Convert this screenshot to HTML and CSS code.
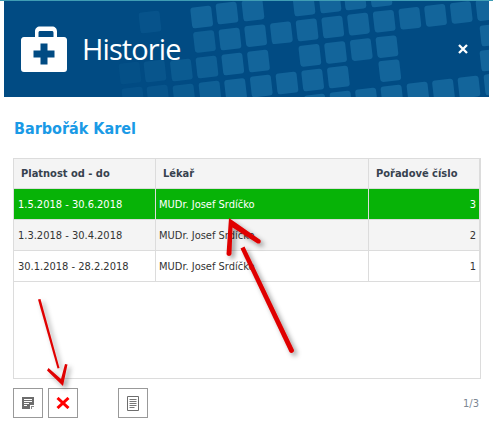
FILE: index.html
```html
<!DOCTYPE html>
<html lang="cs">
<head>
<meta charset="utf-8">
<title>Historie</title>
<link rel="stylesheet" href="styles.css">
</head>
<body>
<div class="page">
  <div class="topline"></div>
  <header class="banner">
    <svg class="pattern" width="485" height="96" viewBox="4 1 485 96" aria-hidden="true">
      <defs><rect id="t" x="-10.5" y="-10.5" width="21" height="21" rx="3"/></defs>
      <g fill="#13659b">
        <use href="#t" transform="translate(150 22) rotate(-6.5)" opacity=".35"/>
        <use href="#t" transform="translate(201.7 17) rotate(-6.5)"/>
        <use href="#t" transform="translate(227 13) rotate(-6.5)"/>
        <use href="#t" transform="translate(253 10) rotate(-6.5)"/>
        <use href="#t" transform="translate(304 5) rotate(-6.5)"/>
        <use href="#t" transform="translate(330 2) rotate(-6.5)"/>
        <use href="#t" transform="translate(355 -1) rotate(-6.5)"/>
        <use href="#t" transform="translate(381 -4) rotate(-6.5)"/>
        <use href="#t" transform="translate(204.5 41.5) rotate(-6.5)" opacity=".8"/>
        <use href="#t" transform="translate(230 39) rotate(-6.5)"/>
        <use href="#t" transform="translate(255.7 35.7) rotate(-6.5)"/>
        <use href="#t" transform="translate(281.4 32.8) rotate(-6.5)"/>
        <use href="#t" transform="translate(307.1 29.9) rotate(-6.5)"/>
        <use href="#t" transform="translate(332.8 27) rotate(-6.5)"/>
        <use href="#t" transform="translate(358.5 24.1) rotate(-6.5)"/>
        <use href="#t" transform="translate(384.2 21.2) rotate(-6.5)"/>
        <use href="#t" transform="translate(409.9 18.3) rotate(-6.5)"/>
        <use href="#t" transform="translate(435.6 15.4) rotate(-6.5)"/>
        <use href="#t" transform="translate(461.3 12.5) rotate(-6.5)"/>
        <use href="#t" transform="translate(487 9.6) rotate(-6.5)"/>
        <use href="#t" transform="translate(130 73) rotate(-6.5)" opacity=".2"/>
        <use href="#t" transform="translate(155 71) rotate(-6.5)" opacity=".4"/>
        <use href="#t" transform="translate(181.4 70) rotate(-6.5)" opacity=".6"/>
        <use href="#t" transform="translate(207 67) rotate(-6.5)" opacity=".8"/>
        <use href="#t" transform="translate(232.8 64) rotate(-6.5)"/>
        <use href="#t" transform="translate(258.5 61) rotate(-6.5)"/>
        <use href="#t" transform="translate(309.9 55.4) rotate(-6.5)"/>
        <use href="#t" transform="translate(335.6 52.5) rotate(-6.5)"/>
        <use href="#t" transform="translate(361.3 49.6) rotate(-6.5)"/>
        <use href="#t" transform="translate(387 46.7) rotate(-6.5)"/>
        <use href="#t" transform="translate(491 35) rotate(-6.5)"/>
        <use href="#t" transform="translate(133 98) rotate(-6.5)" opacity=".3"/>
        <use href="#t" transform="translate(158 96) rotate(-6.5)" opacity=".4"/>
        <use href="#t" transform="translate(184 95) rotate(-6.5)" opacity=".6"/>
        <use href="#t" transform="translate(210 92) rotate(-6.5)" opacity=".8"/>
        <use href="#t" transform="translate(235.6 89.6) rotate(-6.5)"/>
        <use href="#t" transform="translate(261.3 86) rotate(-6.5)"/>
        <use href="#t" transform="translate(287 83) rotate(-6.5)"/>
        <use href="#t" transform="translate(312.7 80) rotate(-6.5)"/>
        <use href="#t" transform="translate(338.4 77) rotate(-6.5)"/>
        <use href="#t" transform="translate(389.8 70.7) rotate(-6.5)"/>
        <use href="#t" transform="translate(491 60) rotate(-6.5)"/>
        <use href="#t" transform="translate(315.4 105) rotate(-6.5)"/>
        <use href="#t" transform="translate(341 102) rotate(-6.5)"/>
        <use href="#t" transform="translate(366.5 99) rotate(-6.5)"/>
        <use href="#t" transform="translate(392 96) rotate(-6.5)"/>
        <use href="#t" transform="translate(418 93) rotate(-6.5)"/>
        <use href="#t" transform="translate(443.5 90) rotate(-6.5)"/>
        <use href="#t" transform="translate(469 87) rotate(-6.5)"/>
        <use href="#t" transform="translate(495 84) rotate(-6.5)"/>
      </g>
    </svg>
    <svg class="medkit" width="46" height="46" viewBox="0 0 46 46" aria-hidden="true">
      <path fill="#fff" fill-rule="evenodd" d="M14 11V5.500C14 2.500 16 .5 19 .5H31C34 .5 36 2.500 36 5.500V11H43C45 11 46 12.500 46 14V43C46 45 45 46 43 46H3C1 46 0 45 0 43V14C0 12.500 1 11 3 11H14ZM17.500 11H32.500V7C32.500 5.500 32 5 30.500 5H19.500C18 5 17.500 5.500 17.500 7V11Z"/>
      <path fill="#014b83" d="M19.500 17.500H26.500V24.500H33.500V31.500H26.500V38.500H19.500V31.500H12.500V24.500H19.500Z"/>
    </svg>
    <h1 class="title">Historie</h1>
    <span class="close">
      <svg width="10" height="10" viewBox="0 0 10 10" aria-hidden="true"><path d="M1 1L9 9M9 1L1 9" stroke="#fff" stroke-width="2.300"/></svg>
    </span>
  </header>
  <main class="content">
    <h2 class="patient">Barbořák Karel</h2>
    <div class="tablebox">
      <table class="grid">
        <colgroup><col class="c1"><col class="c2"><col class="c3"></colgroup>
        <thead>
          <tr><th>Platnost od - do</th><th>Lékař</th><th>Pořadové číslo</th></tr>
        </thead>
        <tbody>
          <tr class="selected"><td>1.5.2018 - 30.6.2018</td><td>MUDr. Josef Srdíčko</td><td class="num">3</td></tr>
          <tr class="odd"><td>1.3.2018 - 30.4.2018</td><td>MUDr. Josef Srdíčko</td><td class="num">2</td></tr>
          <tr><td>30.1.2018 - 28.2.2018</td><td>MUDr. Josef Srdíčko</td><td class="num">1</td></tr>
        </tbody>
      </table>
    </div>
    <div class="toolbar">
      <button class="btn" type="button" aria-label="Detail">
        <svg width="12" height="12" viewBox="0 0 12 12" aria-hidden="true"><path fill="#6d6d6d" d="M0 0H12V8H8V12H0Z"/><path fill="#8a8a8a" d="M9 12V9H12V10H10V12Z"/><path stroke="#fff" d="M2 2.500H10M2 4.500H10M2 6.500H7M2 8.500H5"/></svg>
      </button>
      <button class="btn" type="button" aria-label="Smazat">
        <svg width="14" height="12" viewBox="0 0 14 12" aria-hidden="true"><path d="M1.500 1L12.500 11M12.500 1L1.500 11" stroke="#f00" stroke-width="3"/></svg>
      </button>
      <button class="btn btn-far" type="button" aria-label="Dokument">
        <svg width="12" height="15" viewBox="0 0 12 15" aria-hidden="true"><path fill="none" stroke="#6d6d6d" d="M.5.500H11.500V14.500H.5Z"/><path stroke="#777" d="M2.500 3.500H9.500M2.500 5.500H9.500M2.500 7.500H9.500M2.500 9.500H9.500M2.500 11.500H7.500"/></svg>
      </button>
      <span class="pager">1/3</span>
    </div>
  </main>
  <svg class="arrows" width="493" height="434" viewBox="0 0 493 434" aria-hidden="true">
    <defs>
      <filter id="sh" x="-30%" y="-30%" width="160%" height="160%"><feDropShadow dx="3" dy="3" stdDeviation="2.500" flood-color="#000" flood-opacity=".4"/></filter>
    </defs>
    <g filter="url(#sh)" fill="#df0000">
      <path d="M240.500 248.500L244.500 246.500L294 350C294.500 352.500 291 354 289.500 352Z"/>
      <path d="M229 218L260.500 240C261.500 243 259.500 244 257.500 243.500L232.500 227.500L231.500 254C231 256.500 227 256.500 226.500 254Z"/>
      <path d="M38 299.500L40.500 299L59.500 368L57.500 368.500Z"/>
      <path d="M63 386L47 370.500L48.500 368L61 379L65 364L67.500 364.500Z"/>
    </g>
  </svg>
</div>
</body>
</html>
```
FILE: styles.css
```css
* { box-sizing: border-box; }
html, body { margin: 0; padding: 0; background: #fff; }
.page { position: relative; width: 493px; height: 434px; overflow: hidden; font-family: "DejaVu Sans Condensed", "DejaVu Sans", sans-serif; color: #333; }
.topline { height: 1px; background: #3f9db4; }
.banner { position: relative; display: flex; align-items: center; height: 96px; margin: 0 4px; padding-left: 17px; background: #014b83; overflow: hidden; }
.pattern { position: absolute; left: 0; top: 0; }
.medkit { position: relative; flex: none; }
.title { position: relative; margin: -2px 0 0 15px; font: 400 29px "Open Sans", sans-serif; letter-spacing: -.9px; color: #fff; }
.close { position: absolute; left: 454px; top: 43px; width: 10px; height: 10px; display: flex; }
.content { padding: 0 12px 0 13px; }
.patient { margin: 22px 0 0 1px; height: 19px; font: 700 16px/19px "DejaVu Sans Condensed", "DejaVu Sans", sans-serif; color: #1a9ae6; white-space: nowrap; }
.tablebox { width: 468px; height: 221px; margin-top: 20px; border: 1px solid #dcdcdc; }
.grid { width: 466px; table-layout: fixed; border-collapse: separate; border-spacing: 0; font-size: 11px; }
.c1 { width: 142px; }
.c2 { width: 213px; }
.grid th { height: 30px; padding: 0 0 0 7px; text-align: left; font-size: 11px; font-weight: 700; background: #f4f4f4; border-right: 1px solid #dcdcdc; border-bottom: 1px solid #dcdcdc; color: #37424e; white-space: nowrap; }
.grid td { height: 31px; padding: 0 4px; border-right: 1px solid #dcdcdc; border-bottom: 1px solid #dcdcdc; white-space: nowrap; overflow: hidden; color: #333; }
.grid td:nth-child(2) { padding-left: 3px; }
.grid .num { text-align: right; padding-right: 3px; }
.selected td { background: #07b307; color: #fff; }
.odd td { background: #f4f4f4; }
.toolbar { position: relative; display: flex; align-items: center; gap: 5px; margin-top: 9px; height: 30px; }
.btn { display: flex; align-items: center; justify-content: center; width: 30px; height: 30px; padding: 0; background: #fff; border: 1px solid #999; border-radius: 0; }
.btn-far { margin-left: 35px; }
.pager { margin-left: auto; margin-right: 2px; font-size: 11px; margin-top: 1px; color: #7b8794; }
.arrows { position: absolute; left: 0; top: 0; pointer-events: none; }
```
